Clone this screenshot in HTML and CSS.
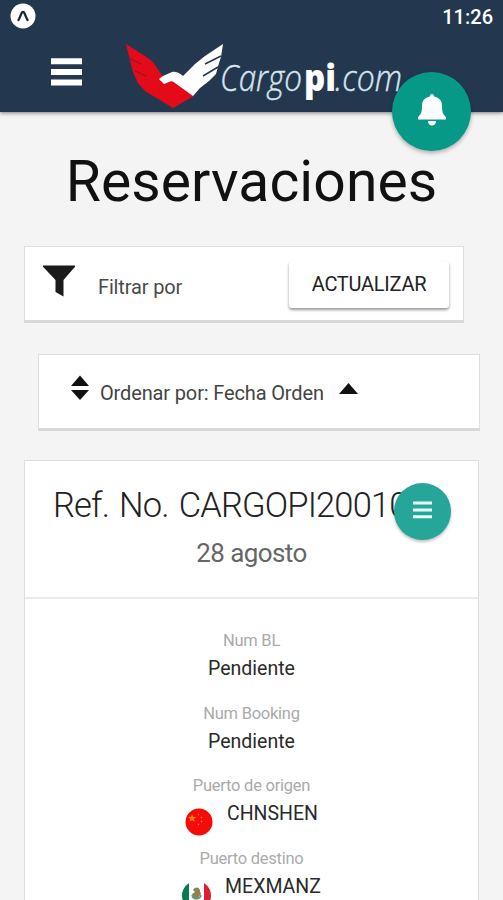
FILE: index.html
```html
<!DOCTYPE html>
<html lang="es">
<head>
<meta charset="utf-8">
<title>Reservaciones</title>
<link rel="stylesheet" href="styles.css">
</head>
<body>
<header class="topbar">
  <div class="status">
    <svg class="status-icon" width="26" height="26" viewBox="0 0 26 26"><circle cx="13" cy="13" r="12.5" fill="#fff"/><path d="M8 17.800C10 15 11.200 10.500 12 9.400q1-1 2 0c.8 1.100 2 5.600 4 8.400" fill="none" stroke="#172a3c" stroke-width="2.300"/></svg>
    <span class="clock">11:26</span>
  </div>
  <div class="brand-row">
    <svg class="menu" width="31" height="28" viewBox="0 0 31 28"><path d="M0 3.300h31M0 14h31M0 24.500h31" stroke="#fff" stroke-width="6"/></svg>
    <svg class="logo" width="280" height="68" viewBox="0 0 280 68">
      <path d="M0 2 19 14 26 19 38 36 47 36 68 54 47 66 19 49 12 41 7 30 3 14z" fill="#e30b17"/>
      <path d="M97 2 79 14 69 22 62 29 57 34Q51 29 46 30L37 34 33 37 38 42 43 40Q46 38 49 41L67 54 74 46 83 39 90 32 93 21 95 15z" fill="#fff"/>
      <path d="m79 22 16-8M77 34l15-9" stroke="#21384e" stroke-width="1.500" fill="none"/>
      <path d="m3 16 12 6M9 29l11 5" stroke="#96112c" stroke-width="1.300" fill="none"/>
      <text class="logo-thin" x="94" y="49" textLength="82" lengthAdjust="spacingAndGlyphs">Cargo</text>
      <text class="logo-bold" x="178" y="49" textLength="32" lengthAdjust="spacingAndGlyphs">pi</text>
      <text class="logo-thin" x="209" y="49" textLength="67" lengthAdjust="spacingAndGlyphs">.com</text>
    </svg>
  </div>
  <button class="bell" aria-label="Notificaciones"><svg width="30" height="34" viewBox="0 0 30 34"><path d="M15 1c1.500 0 2 1 2 2.500C22.500 4.500 25 8 25 13c0 6 1 8.500 4 11v2.500H1V24c3-2.500 4-5 4-11 0-5 2.500-8.500 8-9.500C13 2 13.500 1 15 1zM11 28h8c0 6-8 6-8 0z" fill="#fff"/></svg></button>
</header>
<main>
  <h1>Reservaciones</h1>
  <section class="panel filter">
    <svg class="funnel" width="32" height="32" viewBox="0 0 32 32"><path d="M0 .5h32v1.300L20.500 15v16.500L12.500 27V15L0 1.800z" fill="#1b1b1b"/></svg>
    <span class="filter-label">Filtrar por</span>
    <button class="refresh">ACTUALIZAR</button>
  </section>
  <section class="panel sort">
    <svg class="sort-icon" width="18" height="26" viewBox="0 0 18 26"><path d="M9 .5 18 11H0zM0 15h18L9 25z" fill="#111"/></svg>
    <span class="sort-label">Ordenar por: Fecha Orden</span>
    <svg class="sort-up" width="19" height="11" viewBox="0 0 19 11"><path d="M9.500 0 19 11H0z" fill="#111"/></svg>
  </section>
  <article class="panel booking">
    <div class="booking-head">
      <h2>Ref. No. CARGOPI20010</h2>
      <p class="date">28 agosto</p>
      <button class="options" aria-label="Opciones"><svg width="19" height="18" viewBox="0 0 19 18"><path d="M0 2h19M0 9h19M0 15.800h19" stroke="#e8fffb" stroke-width="3"/></svg></button>
    </div>
    <dl class="details">
      <dt>Num BL</dt><dd><span>Pendiente</span></dd>
      <dt>Num Booking</dt><dd><span>Pendiente</span></dd>
      <dt>Puerto de origen</dt>
      <dd><svg class="flag" width="28" height="28" viewBox="0 0 28 28"><circle cx="14" cy="14" r="13.500" fill="#f50b08"/><path d="m7 6 1.200 2.700 3 .2-2.300 2 .8 2.800L7 12.200l-2.500 1.500.8-2.800-2.300-2 3-.2z" fill="#ff7a12"/><path d="m13 6 1 1m2 2 1 1m-1 4 1-1m-4 4 1-1" stroke="#ff7a12" stroke-width="1.300"/></svg><span>CHNSHEN</span></dd>
      <dt>Puerto destino</dt>
      <dd><svg class="flag" width="29" height="29" viewBox="0 0 29 29"><clipPath id="round"><circle cx="14.500" cy="14.500" r="14.500"/></clipPath><g clip-path="url(#round)"><path fill="#fff" d="M0 0h29v29H0z"/><path fill="#087b50" d="M0 0h7v29H0z"/><path fill="#dc1f35" d="M22 0h7v29h-7z"/><path d="M11 9c2-4 7-3 7 1l1 3-3 4h-4l-2-4 3-2z" fill="#8d8355"/><path d="M10 14c1 5 8 5 9 0" fill="none" stroke="#66936a" stroke-width="1.500"/></g></svg><span>MEXMANZ</span></dd>
    </dl>
  </article>
</main>
</body>
</html>
```
FILE: styles.css
```css
* { box-sizing: border-box; }
body {
  margin: 0;
  height: 900px;
  overflow: hidden;
  background: #f4f4f4;
  color: #111;
  font-family: Roboto, sans-serif;
}
button { border: 0; padding: 0; font-family: inherit; }
.topbar {
  position: relative;
  height: 112px;
  background: #23384f;
  box-shadow: 0 1px 4px rgba(0, 0, 0, .5);
}
.status {
  display: flex;
  justify-content: space-between;
  height: 42px;
  padding: 3px 10px 0 10px;
}
.clock {
  color: #fff;
  font-size: 20px;
  font-weight: 500;
  line-height: 28px;
}
.brand-row { display: flex; padding-left: 51px; }
.menu { margin-top: 16px; }
.logo { margin-left: 44px; }
.logo-thin { font: italic 300 37px "Open Sans", sans-serif; fill: #d8e5f0; stroke: #d8e5f0; stroke-width: .4px; }
.logo-bold { font: 800 37px "Open Sans", sans-serif; fill: #fff; }
.bell {
  position: absolute;
  right: 32px;
  top: 72px;
  display: grid;
  place-items: center;
  width: 79px;
  height: 79px;
  padding-bottom: 3px;
  border-radius: 50%;
  background: #069987;
  box-shadow: 0 2px 4px rgba(0, 0, 0, .3);
}
h1 {
  margin: 40px 0 0;
  text-align: center;
  font-size: 57px;
  font-weight: 400;
  letter-spacing: .1px;
  line-height: 60px;
}
.panel {
  background: #fff;
  border: 1px solid #dedede;
  border-bottom: 3px solid #d8d8d8;
}
.filter {
  display: flex;
  width: 440px;
  height: 77px;
  margin: 34px 0 0 24px;
  padding: 0 14px 0 18px;
}
.funnel { margin-top: 18px; }
.filter-label { margin: 27px auto 0 23px; color: #4a4a4a; font-size: 20px; letter-spacing: -.15px; line-height: 26px; }
.refresh {
  width: 160px;
  height: 47px;
  margin-top: 14px;
  border-radius: 3px;
  background: #fff;
  color: #222;
  font-size: 20px;
  letter-spacing: -.25px;
  line-height: 47px;
  box-shadow: 0 2px 3px rgba(0, 0, 0, .4);
}
.sort {
  display: flex;
  width: 442px;
  height: 77px;
  margin: 31px 0 0 38px;
  padding-left: 32px;
}
.sort-icon { margin-top: 20px; }
.sort-label { margin: 25px 15px 0 11px; color: #444; font-size: 20px; letter-spacing: -.14px; line-height: 26px; }
.sort-up { margin-top: 28px; }
.booking { width: 455px; height: 480px; margin: 29px 0 0 24px; }
.booking-head {
  position: relative;
  height: 138px;
  border-bottom: 2px solid #ebebeb;
}
h2 {
  margin: 0;
  padding: 24px 0 0 28px;
  color: #222;
  font-size: 34.5px;
  font-weight: 300;
  letter-spacing: -.85px;
  word-spacing: 2.5px;
  line-height: 40px;
  white-space: nowrap;
}
.date { margin: 12px 0 0; text-align: center; color: #666; font-size: 26px; letter-spacing: -.6px; line-height: 32px; }
.options {
  position: absolute;
  right: 27px;
  top: 22px;
  display: grid;
  place-items: center;
  width: 57px;
  height: 57px;
  padding-bottom: 3px;
  border-radius: 50%;
  background: #26a699;
  box-shadow: 0 2px 3px rgba(0, 0, 0, .25);
}
.details { margin: 30px 0 0; text-align: center; }
dt { height: 24px; color: #aaa; font-size: 16.5px; letter-spacing: -.25px; line-height: 24px; }
dd {
  display: flex;
  justify-content: center;
  gap: 14px;
  height: 48.5px;
  margin: 0;
  color: #2a2a2a;
  font-size: 19.5px;
  line-height: 32px;
}
.flag { margin-top: 10px; }
```
